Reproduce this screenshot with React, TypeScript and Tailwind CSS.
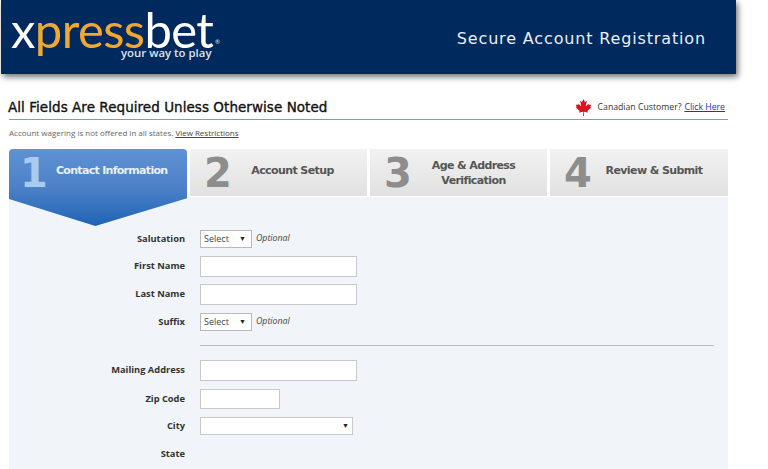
import React from "react";
import { FaCanadianMapleLeaf } from "react-icons/fa";

const body = "font-['Liberation_Sans',Arial,sans-serif]";
const wide = "font-['DejaVu_Sans',Verdana,sans-serif]";
const tahoma = "font-['Open_Sans',Tahoma,sans-serif]";

function Tab({ n, w, pad, children }: { n: string; w: string; pad: string; children: React.ReactNode }) {
  return (
    <div className={`flex h-[47px] ${w} items-center bg-gradient-to-b from-[#f2f2f2] to-[#e1e1e1]`}>
      <span className={`${wide} w-[52px] shrink-0 pl-[14px] text-[40px] leading-none font-bold text-[#8d8d8d]`}>{n}</span>
      <span className={`${wide} flex-1 text-center text-[11px] leading-[15px] font-bold tracking-[-0.6px] text-[#555] ${pad}`}>{children}</span>
    </div>
  );
}

function Label({ children }: { children: React.ReactNode }) {
  return (
    <span className={`${tahoma} w-[176px] shrink-0 pb-px text-right text-[9.3px] font-bold text-[#333]`}>{children}</span>
  );
}

function Row({ label, h, mt, children }: { label: string; h: string; mt: string; children?: React.ReactNode }) {
  return (
    <div className={`flex items-center gap-[15px] ${h} ${mt}`}>
      <Label>{label}</Label>
      {children}
    </div>
  );
}

function TextBox({ w }: { w: string }) {
  return <div className={`h-full ${w} border border-[#c9c9c9] bg-white`} />;
}

function SmallSelect({ optional }: { optional?: boolean }) {
  return (
    <>
      <div className={`${tahoma} flex h-full w-[52px] items-center justify-between border border-[#b9b9b9] bg-white pr-[5px] pl-[3px] text-[9px] text-[#444]`}>
        <span>Select</span>
        <span className="text-[7px] text-[#222]">▼</span>
      </div>
      {optional && <span className={`${tahoma} -ml-[11px] text-[8.8px] text-[#444] italic`}>Optional</span>}
    </>
  );
}

export default function App() {
  return (
    <div className={`${body} relative h-[469px] w-[768px] overflow-hidden bg-white`}>
      <header className="ml-px flex h-[74px] w-[735px] items-center justify-between bg-[#002a5e] pr-[30px] pl-[10px] shadow-[2px_3px_6px_rgba(0,0,0,0.55)]">
        <div className="relative h-[74px] w-[215px] font-['Lato',sans-serif]">
          <div className="absolute top-0 left-0 text-[49px] leading-[58px] font-normal tracking-[-0.6px] whitespace-nowrap text-[#f0a92e]">
            <span className="text-white">x</span>press<span className="text-white">bet</span>
          </div>
          <div className="absolute top-[38px] left-[204px] text-[6px] leading-[8px] text-[#dce3ee]">®</div>
          <div className="absolute top-[46px] left-[110px] font-['Open_Sans',sans-serif] text-[11.4px] leading-[14px] font-semibold whitespace-nowrap text-[#dce3ee]">your way to play</div>
        </div>
        <div className={`${wide} pt-[3px] text-[16px] tracking-[0.85px] text-[#e8eff6]`}>Secure Account Registration</div>
      </header>

      <main className="ml-[9px] w-[719px]">
        <div className="mt-[24px] flex h-[22px] items-center justify-between border-b border-[#7f9db0] pb-[2px]">
          <h1 className={`${wide} -ml-px text-[13.5px] font-normal tracking-[0.05px] text-[#111] [-webkit-text-stroke:0.35px_#111]`}>All Fields Are Required Unless Otherwise Noted</h1>
          <div className={`${tahoma} mr-[3px] flex items-center text-[8.7px] text-[#333]`}>
            <FaCanadianMapleLeaf className="mr-[6px] text-[17px] text-[#e2121c]" />
            <span className="mr-[3px]">Canadian Customer?</span>
            <a className="text-[#2d2fb5] underline">Click Here</a>
          </div>
        </div>
        <p className={`${tahoma} mt-[8px] h-[10px] text-[8px] leading-[10px] text-[#666]`}>
          Account wagering is not offered in all states. <a className="text-[#444] underline">View Restrictions</a>
        </p>

        <div className="mt-[11px] flex gap-[3px]">
          <div className="relative h-[47px] w-[178px]">
            <div className="absolute top-0 left-0 h-[77px] w-[178px] rounded-t-[4px] bg-gradient-to-b from-[#5f92d3] via-[#4c81c8] to-[#1c63b6] [clip-path:polygon(0_0,100%_0,100%_64%,48.5%_100%,0_65%)]" />
            <div className="relative flex h-[47px] items-center">
              <span className={`${wide} w-[47px] shrink-0 pl-[11px] text-[40px] leading-none font-bold text-[#a9cbf0]`}>1</span>
              <span className={`${wide} pb-[2px] text-[11px] font-bold tracking-[-0.7px] whitespace-nowrap text-[#e8f0fa]`}>Contact Information</span>
            </div>
          </div>
          <Tab n="2" w="w-[177px]" pad="pr-[24px] pb-[4px]">Account Setup</Tab>
          <Tab n="3" w="w-[177px]" pad="pr-[22px]">Age &amp; Address<br />Verification</Tab>
          <Tab n="4" w="w-[178px]" pad="pr-[22px] pb-[4px]">Review &amp; Submit</Tab>
        </div>

        <section className="mt-px h-[272px] bg-[#f1f4f9] pt-[33px]">
          <Row label="Salutation" h="h-[18px]" mt="mt-0"><SmallSelect optional /></Row>
          <Row label="First Name" h="h-[21px]" mt="mt-[8px]"><TextBox w="w-[157px]" /></Row>
          <Row label="Last Name" h="h-[21px]" mt="mt-[7px]"><TextBox w="w-[157px]" /></Row>
          <Row label="Suffix" h="h-[18px]" mt="mt-[8px]"><SmallSelect optional /></Row>
          <div className="mt-[14px] ml-[191px] h-px w-[514px] bg-[#b8bcc2]" />
          <Row label="Mailing Address" h="h-[21px]" mt="mt-[14px]"><TextBox w="w-[157px]" /></Row>
          <Row label="Zip Code" h="h-[20px]" mt="mt-[8px]"><TextBox w="w-[80px]" /></Row>
          <Row label="City" h="h-[18px]" mt="mt-[8px]">
            <div className="flex h-full w-[153px] items-center justify-end border border-[#c9c9c9] bg-white pr-[3px] text-[7px] text-[#222]">▼</div>
          </Row>
          <Row label="State" h="h-[18px]" mt="mt-[10px]" />
        </section>
      </main>
    </div>
  );
}
